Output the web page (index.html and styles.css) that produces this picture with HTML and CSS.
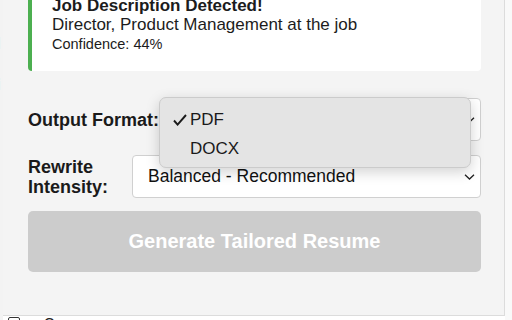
FILE: index.html
```html
<!DOCTYPE html>
<html>
<head>
<meta charset="utf-8">
<link rel="stylesheet" href="styles.css">
</head>
<body>
<div class="screen">
  <div class="behind-left"><span>l</span><span class="gap2">i</span></div>
  <div class="column">
    <div class="popup">
      <div class="card">
        <div class="card-title">Job Description Detected!</div>
        <div class="card-line">Director, Product Management at the job</div>
        <div class="card-small">Confidence: 44%</div>
      </div>

      <div class="form">
        <div class="field field-1">
          <label class="label">Output Format:</label>
          <div class="select">
            <span class="select-text">PDF</span>
            <svg class="chev" width="11" height="6" viewBox="0 0 11 6"><path d="M1 0.8 L5.5 5 L10 0.8" fill="none" stroke="#222" stroke-width="1.3"/></svg>
          </div>
          <div class="menu">
            <div class="menu-item"><svg class="check" width="14" height="12" viewBox="0 0 14 12"><path d="M1 6.5 L4.6 10.6 L13 1" fill="none" stroke="#1a1a1a" stroke-width="1.9"/></svg>PDF</div>
            <div class="menu-item"><span class="check"></span>DOCX</div>
          </div>
        </div>
        <div class="field field-2">
          <label class="label">Rewrite<br>Intensity:</label>
          <div class="select">
            <span class="select-text">Balanced - Recommended</span>
            <svg class="chev" width="11" height="6" viewBox="0 0 11 6"><path d="M1 0.8 L5.5 5 L10 0.8" fill="none" stroke="#222" stroke-width="1.3"/></svg>
          </div>
        </div>
        <button class="generate">Generate Tailored Resume</button>
      </div>
    </div>
    <div class="below"><span class="icon-box"></span><span class="below-text">Q</span></div>
  </div>
  <div class="behind-right"></div>
</div>
</body>
</html>
```
FILE: styles.css
```css
html, body {
  margin: 0;
  padding: 0;
}
body {
  width: 512px;
  height: 320px;
  overflow: hidden;
  background: #ffffff;
  font-family: "Liberation Sans", Arial, sans-serif;
  color: #1c1c1c;
}
.screen {
  display: flex;
  height: 320px;
}
.behind-left {
  width: 3px;
  overflow: hidden;
  background: #f3f3f3;
  display: flex;
  flex-direction: column;
  font-size: 17px;
  font-weight: bold;
  line-height: 14px;
  padding-top: 37px;
  text-indent: -4px;
  color: #111;
}
.behind-left .gap2 {
  margin-top: 27px;
}
.column {
  width: 502px;
  display: flex;
  flex-direction: column;
}
.popup {
  height: 315px;
  background: #f4f4f4;
  border-right: 1px solid #dcdcdc;
  border-bottom: 1px solid #dcdcdc;
  overflow: hidden;
  padding: 0 23px 0 25px;
}
.behind-right {
  flex: 1;
  background: #f9f9f9;
}
.below {
  height: 4px;
  background: #fff;
  position: relative;
  overflow: hidden;
  display: flex;
  gap: 24px;
  padding-left: 5px;
  font-size: 14px;
  line-height: 14px;
}
.icon-box {
  width: 10px;
  height: 10px;
  border: 1.5px solid #333;
  border-radius: 2px;
  margin-top: 1px;
}
.below-text {
  color: #222;
}
.card {
  margin-top: -12px;
  background: #fff;
  border-left: 4px solid #4caf50;
  border-radius: 4px;
  padding: 8px 16px 17px 20px;
}
.card-title {
  font-size: 17px;
  font-weight: bold;
  line-height: 19px;
}
.card-line {
  font-size: 17px;
  line-height: 19px;
}
.card-small {
  font-size: 14.5px;
  line-height: 19px;
  margin-top: 1px;
}
.form {
  padding-top: 27px;
}
.field {
  display: flex;
  align-items: center;
  margin-bottom: 14px;
  position: relative;
}
.field-1 {
  z-index: 2;
}
.field-2 {
  margin-bottom: 13px;
  z-index: 1;
}
.label {
  font-size: 18px;
  font-weight: bold;
  line-height: 20px;
  white-space: nowrap;
  margin-right: 24px;
  color: #1a1a1a;
}
.select {
  flex: 1;
  height: 41px;
  background: #fff;
  border: 1px solid #d0d0d0;
  border-radius: 4px;
  display: flex;
  align-items: center;
  justify-content: space-between;
  padding: 0 5px 0 15px;
  font-size: 17.5px;
  color: #111;
}
.chev {
  display: block;
}
.menu {
  position: absolute;
  z-index: 10;
  left: 131px;
  top: -1px;
  width: 312px;
  height: 71px;
  background: #e4e4e4;
  border: 1px solid #cbcbcb;
  border-radius: 7px;
  box-shadow: 0 4px 14px rgba(0,0,0,0.18);
  padding-top: 7px;
  box-sizing: border-box;
}
.menu-item {
  display: flex;
  align-items: center;
  height: 29px;
  font-size: 17px;
  padding-left: 13px;
  color: #1a1a1a;
}
.check {
  width: 14px;
  margin-right: 3px;
  display: block;
  flex: none;
}
.generate {
  display: block;
  width: 100%;
  height: 61px;
  border: none;
  border-radius: 5px;
  background: #cccccc;
  color: #fff;
  font-family: "Liberation Sans", Arial, sans-serif;
  font-weight: bold;
  font-size: 20px;
  margin-top: 0;
}
```
